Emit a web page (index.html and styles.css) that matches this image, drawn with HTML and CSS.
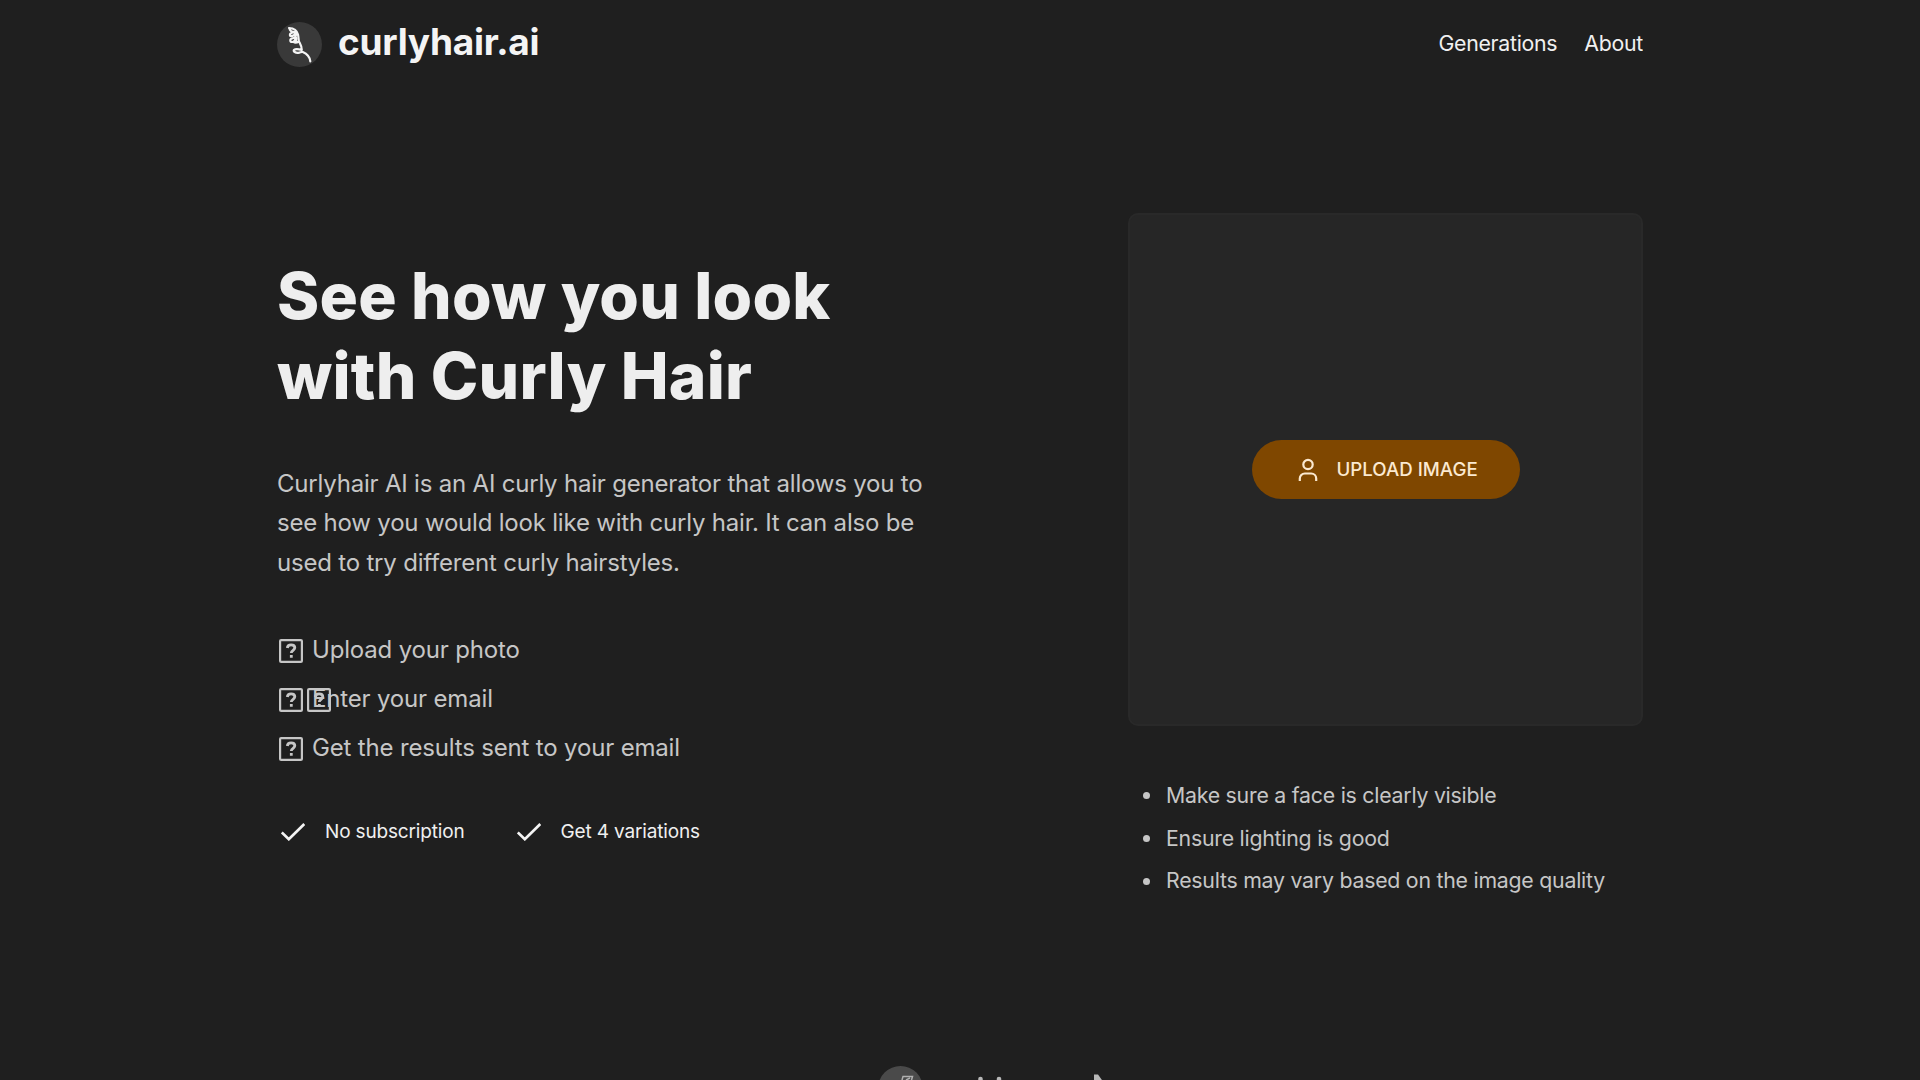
FILE: index.html
```html
<!DOCTYPE html>
<html lang="en">
<head>
<meta charset="utf-8">
<title>curlyhair.ai</title>
<link rel="stylesheet" href="styles.css">
</head>
<body>
<div class="page">
  <header class="header">
    <a class="brand">
      <svg class="brand-mark" viewBox="0 0 45 45"><circle cx="22.5" cy="22.5" r="22.5" fill="#393939"/><path d="M12 6c4.500.2 8 2.500 9 6.500.6 2.500.5 5.500 1 7.500M12.500 6.500c.2 2.500 2.500 3.300 5 3.500M19 11c-3-1.500-6.500 0-6 2.500.8 1.800 4.500-.5 5.500-2 1.500 2-.5 4.500-3.500 5-2.500.5-2 3.500 0 3.500 2.500 0 3.500-2.500 4-4.500.5 2.500-.5 4.500-1.500 5 1.500.3 3-.2 4.500-1 1.300 2.500 3 5 2.800 8.500-2.300-.7-6-1.500-7.800-.2-1 1.700 1.500 3.200 4.300 3 2-.1 3-1.300 4.500-.8 4 1.700 7 5 7.500 9.300" fill="none" stroke="#f4f4f4" stroke-width="2.200" stroke-linecap="round" stroke-linejoin="round"/></svg>
      <span class="brand-name">curlyhair.ai</span>
    </a>
    <nav class="nav"><a>Generations</a><a>About</a></nav>
  </header>
  <main class="hero">
    <section class="intro">
      <h1>See how you look<br>with Curly Hair</h1>
      <p class="lead">Curlyhair AI is an AI curly hair generator that allows you to see how you would look like with curly hair. It can also be used to try different curly hairstyles.</p>
      <ul class="steps">
        <li><span class="marks"><svg viewBox="0 0 24 24"><use href="#unknown"/></svg></span>Upload your photo</li>
        <li><span class="marks"><svg viewBox="0 0 24 24"><use href="#unknown"/></svg><svg viewBox="0 0 24 24"><use href="#unknown"/></svg></span>Enter your email</li>
        <li><span class="marks"><svg viewBox="0 0 24 24"><use href="#unknown"/></svg></span>Get the results sent to your email</li>
      </ul>
      <div class="perks">
        <div class="perk"><svg viewBox="0 0 24 18"><path d="M.8 9.500l7 6.700L23.300 1"/></svg>No subscription</div>
        <div class="perk"><svg viewBox="0 0 24 18"><path d="M.8 9.500l7 6.700L23.300 1"/></svg>Get 4 variations</div>
      </div>
    </section>
    <section class="upload">
      <div class="dropzone">
        <button class="upload-button">
          <svg viewBox="0 0 20 24"><circle cx="10" cy="6.500" r="4.700"/><path d="M1.800 23v-2.500a5 5 0 0 1 5-5h6.400a5 5 0 0 1 5 5V23"/></svg>
          <span>UPLOAD IMAGE</span>
        </button>
      </div>
      <ul class="tips">
        <li>Make sure a face is clearly visible</li>
        <li>Ensure lighting is good</li>
        <li>Results may vary based on the image quality</li>
      </ul>
    </section>
  </main>
  <footer class="strip">
    <svg viewBox="0 0 240 46"><circle cx="22.500" cy="22.500" r="22.500" fill="#4a4a4a"/><path d="M24 14l1-3.500h9.500l-1 3.500M28 14l4-2" fill="none" stroke="#b0b0b0" stroke-width="1.500"/><g fill="#b8b8b8"><circle cx="102.500" cy="13" r="2.300"/><circle cx="121" cy="13" r="2.300"/><path d="M216 8.500h4l5 7h-9z"/></g></svg>
  </footer>
</div>
<svg class="defs"><defs><g id="unknown" fill="none" stroke="currentColor"><rect x="1.100" y="1.100" width="21.800" height="21.800" rx="1" stroke-width="2.200"/><path d="M8.300 9c.2-2 1.700-3.200 3.800-3.200s3.700 1.200 3.700 3c0 2.500-3.500 2.500-3.500 5.200M12.300 16v2.700" stroke-width="2.800"/></g></defs></svg>
</body>
</html>
```
FILE: styles.css
```css
* { box-sizing: border-box; }
body { margin: 0; background: #1f1f1f; color: #eee; font-family: Inter, "Liberation Sans", sans-serif; height: 1080px; overflow: hidden; }
ul { margin: 0; padding: 0; }
.defs { display: none; }
.page { width: 1366px; margin: 0 auto; height: 1080px; overflow: hidden; }
.header { height: 88px; display: flex; align-items: center; justify-content: space-between; }
.brand { display: flex; align-items: center; gap: 16px; }
.brand-mark { width: 45px; height: 45px; }
.brand-name { font-size: 37px; font-weight: 700; line-height: 44px; letter-spacing: -0.26px; color: #f4f4f4; margin-top: -4px; }
.nav { display: flex; gap: 27px; font-size: 21.300px; line-height: 28px; letter-spacing: -0.280px; color: #f0f0f0; padding-bottom: 2px; }
.hero { display: flex; justify-content: space-between; height: 978px; padding-top: 125px; }
.intro { width: 670px; padding-top: 43px; }
h1 { margin: 0; font-size: 64px; line-height: 80px; font-weight: 800; letter-spacing: 0.22px; color: #eee; }
.lead { margin: 48px 0 0; font-size: 24px; line-height: 39.300px; letter-spacing: -0.200px; color: #c6c6c6; }
.steps { list-style: none; margin-top: 47px; font-size: 24px; letter-spacing: -0.170px; color: #c6c6c6; }
.steps li { display: flex; height: 49.200px; line-height: 41px; }
.marks { width: 35px; flex: none; display: flex; gap: 4px; padding: 10px 0 0 2px; }
.marks svg { width: 24px; height: 24px; flex: none; }
.perks { display: flex; gap: 48px; margin-top: 44px; font-size: 19px; letter-spacing: -0.160px; color: #f0f0f0; }
.perk { display: flex; align-items: center; gap: 20px; padding-left: 4px; }
.perk svg { width: 24px; height: 18px; fill: none; stroke: #f4f4f4; stroke-width: 2.700; }
.upload { width: 515px; }
.dropzone { height: 513px; border: 2px solid #292929; border-radius: 10px; background: #262626; display: flex; align-items: center; justify-content: center; }
.upload-button { width: 268px; height: 59px; border: 0; border-radius: 30px; background: #7f4700; color: #fbe9d0; font: 500 18.700px Inter, sans-serif; display: flex; align-items: center; padding: 0 0 0 46px; gap: 19px; }
.upload-button svg { width: 20px; height: 24px; fill: none; stroke: currentColor; stroke-width: 2.200; }
.tips { list-style: none; margin-top: 48px; padding-left: 15px; font-size: 21.300px; line-height: 42.700px; letter-spacing: -0.240px; color: #c6c6c6; }
.tips li { display: flex; align-items: center; gap: 16px; }
.tips li::before { content: ""; width: 7px; height: 7px; margin-top: 1px; border-radius: 50%; background: currentColor; }
.strip { display: flex; justify-content: center; padding-left: 76px; }
.strip svg { width: 240px; height: 46px; }
```
